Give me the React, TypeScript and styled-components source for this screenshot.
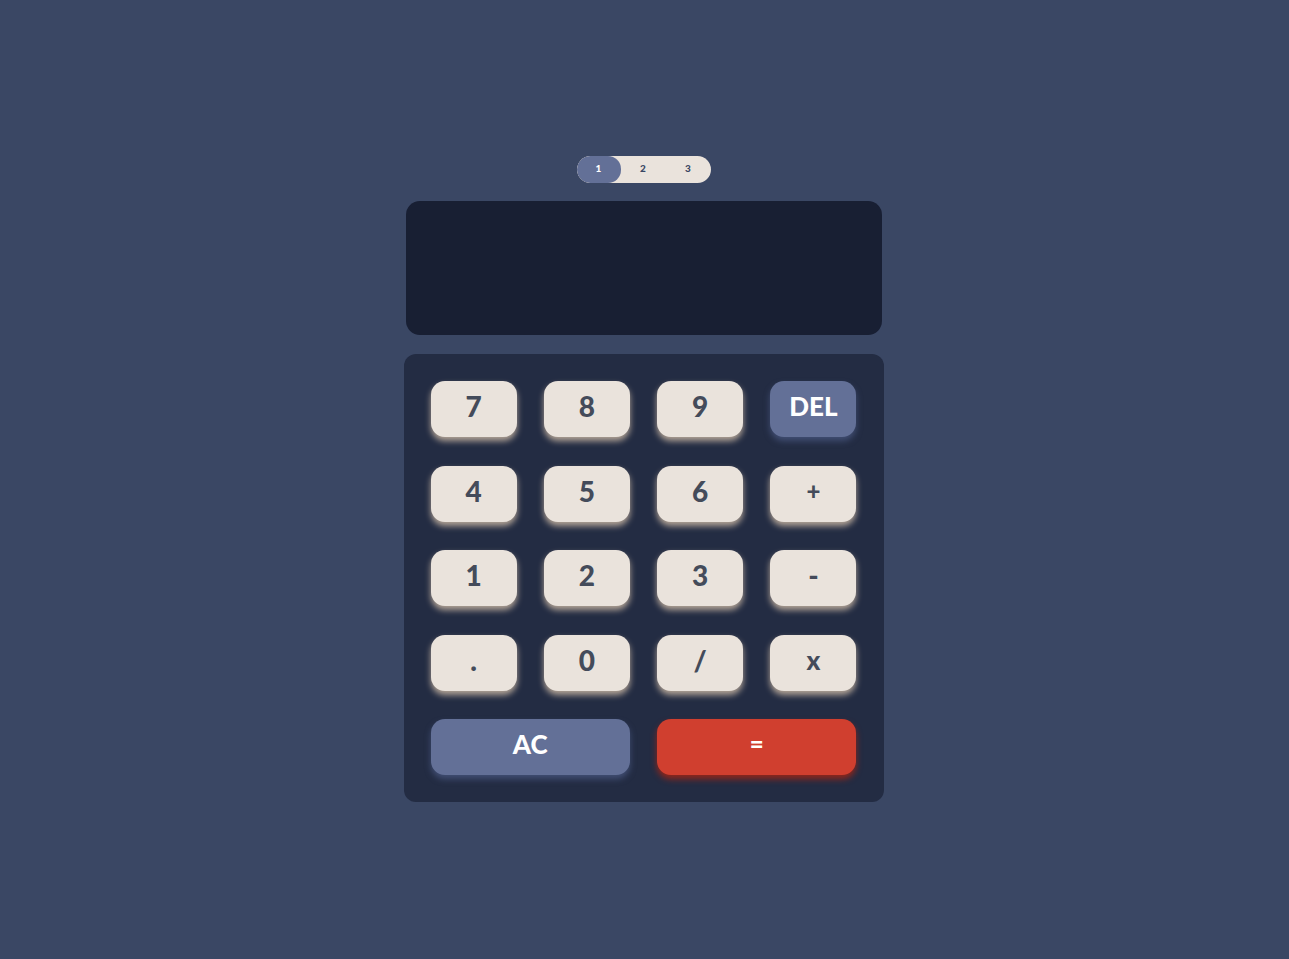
import React from "react";
import styled, { createGlobalStyle } from "styled-components";

const Global = createGlobalStyle`
  html, body { margin: 0; padding: 0; background: #3a4764; }
  body { font-family: "League Spartan", "Lato", "Open Sans", sans-serif; }
  #root { min-height: 959px; }
`;

const Page = styled.main`
  min-height: 959px;
  display: flex;
  flex-direction: column;
  align-items: center;
  padding-top: 156px;
  padding-right: 2px;
  box-sizing: border-box;
`;

const Toggle = styled.div`
  width: 134px;
  height: 27px;
  border-radius: 14px;
  background: #eae3dc;
  display: grid;
  grid-template-columns: 44px 45px 45px;
  margin-bottom: 18px;
  overflow: hidden;
`;

const ToggleItem = styled.button<{ $active?: boolean }>`
  border: 0;
  margin: 0;
  padding: 0 0 3px 0;
  height: 27px;
  border-radius: 13px;
  background: ${(p) => (p.$active ? "#637097" : "transparent")};
  color: ${(p) => (p.$active ? "#ffffff" : "#3a4764")};
  font-family: "Lato", sans-serif;
  font-weight: 900;
  font-size: 10px;
  display: flex;
  align-items: center;
  justify-content: center;
  cursor: pointer;
`;

const Screen = styled.div`
  width: 476px;
  height: 134px;
  border-radius: 14px;
  background: #181f33;
  margin-bottom: 19px;
`;

const Keypad = styled.div`
  width: 480px;
  box-sizing: border-box;
  padding: 27px;
  border-radius: 12px;
  background: #232c43;
  display: grid;
  grid-template-columns: repeat(4, 86px);
  grid-template-rows: repeat(5, 56px);
  column-gap: 27.33px;
  row-gap: 28.5px;
`;

const Key = styled.button<{ $variant?: "num" | "func" | "equal"; $span?: number; $size?: number }>`
  border: 0;
  margin: 0;
  padding: 0 0 6px 0;
  border-radius: 14px;
  grid-column: span ${(p) => p.$span ?? 1};
  display: flex;
  align-items: center;
  justify-content: center;
  font-family: "Lato", "Open Sans", sans-serif;
  font-weight: 900;
  font-size: ${(p) => p.$size ?? 28}px;
  line-height: 1;
  cursor: pointer;
  background: ${(p) =>
    p.$variant === "func" ? "#637097" : p.$variant === "equal" ? "#d03f2f" : "#eae3dc"};
  color: ${(p) => (p.$variant === "func" || p.$variant === "equal" ? "#ffffff" : "#444b5a")};
  box-shadow: 0 4px 6px
    ${(p) =>
      p.$variant === "func" ? "#414e73" : p.$variant === "equal" ? "#93261a" : "#b4a597"};
`;

const keys: { label: string; variant?: "num" | "func" | "equal"; span?: number; size?: number }[] = [
  { label: "7" },
  { label: "8" },
  { label: "9" },
  { label: "DEL", variant: "func", size: 26 },
  { label: "4" },
  { label: "5" },
  { label: "6" },
  { label: "+", size: 24 },
  { label: "1" },
  { label: "2" },
  { label: "3" },
  { label: "-", size: 28 },
  { label: ".", size: 28 },
  { label: "0" },
  { label: "/" },
  { label: "x", size: 26 },
  { label: "AC", variant: "func", span: 2, size: 26 },
  { label: "=", variant: "equal", span: 2, size: 24 },
];

export default function App() {
  return (
    <>
      <Global />
      <Page>
        <Toggle>
          <ToggleItem $active>1</ToggleItem>
          <ToggleItem>2</ToggleItem>
          <ToggleItem>3</ToggleItem>
        </Toggle>
        <Screen />
        <Keypad>
          {keys.map((k) => (
            <Key key={k.label} $variant={k.variant} $span={k.span} $size={k.size}>
              {k.label}
            </Key>
          ))}
        </Keypad>
      </Page>
    </>
  );
}
